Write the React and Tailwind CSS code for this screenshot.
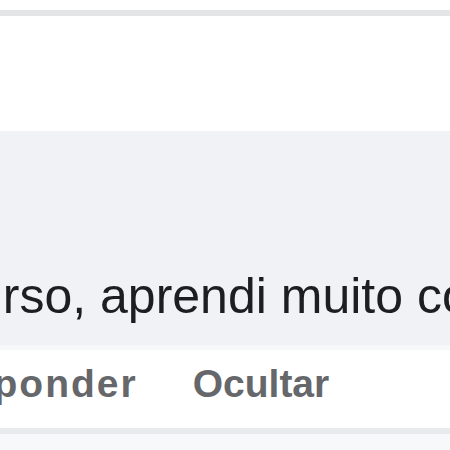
export default function App() {
  return (
    <div className="w-[450px] h-[450px] bg-white overflow-hidden flex flex-col font-['Liberation_Sans',Arial,sans-serif]">
      <div className="h-[10px] shrink-0" />
      <div className="h-[6px] shrink-0 bg-[#e4e5e7]" />
      <div className="h-[115px] shrink-0 bg-white" />

      {/* bolha do comentário */}
      <div className="h-[214px] shrink-0 bg-[#f0f2f5] overflow-hidden pt-[137px]">
        <p className="ml-[-50px] whitespace-nowrap text-[50px] leading-[56px] text-[#1c1e21]">
          curso, aprendi muito com vocês!
        </p>
      </div>

      <div className="h-[5px] shrink-0 bg-[#f7f8fa]" />

      {/* ações */}
      <div className="h-[78px] shrink-0 bg-white overflow-hidden pt-[12px]">
        <div className="ml-[-84px] flex gap-[55px] whitespace-nowrap text-[39px] leading-[44px] font-bold text-[#65676b]">
          <span className="tracking-[2px]">Responder</span>
          <span>Ocultar</span>
        </div>
      </div>

      <div className="h-[6px] shrink-0 bg-[#e9eaed]" />
      <div className="flex-1 bg-[#f7f8fa]" />
    </div>
  );
}
